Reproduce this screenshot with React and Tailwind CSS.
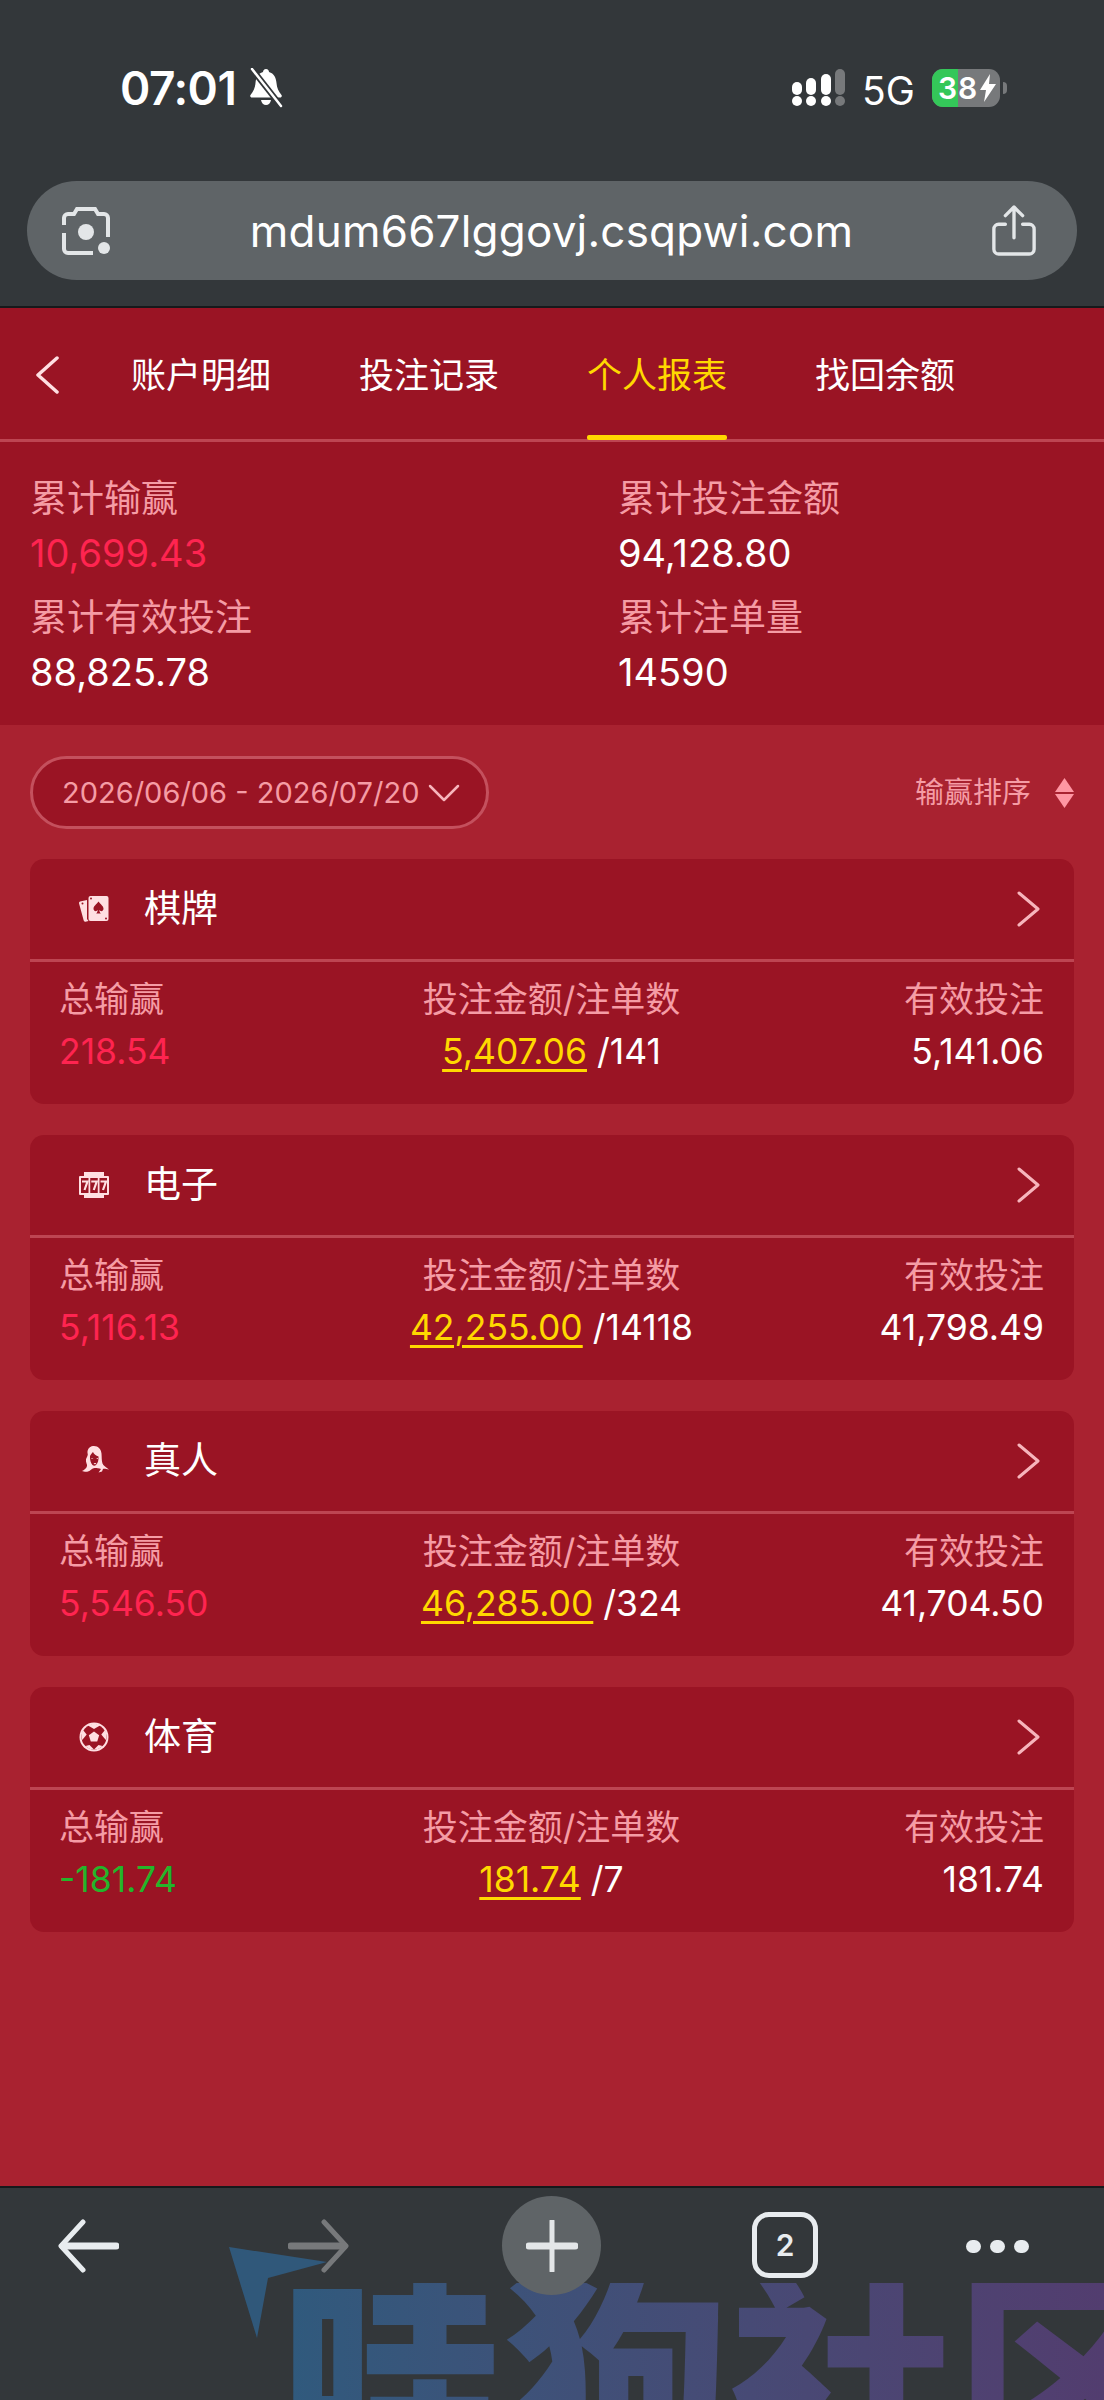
const SANS = 'font-["Inter","Noto_Sans_CJK_SC",sans-serif]'

const TABS = [
  { label: '账户明细' },
  { label: '投注记录' },
  { label: '个人报表', active: true },
  { label: '找回余额' },
]

const SUMMARY = [
  { label: '累计输赢', value: '10,699.43', color: 'text-[#ff2450]' },
  { label: '累计投注金额', value: '94,128.80', color: 'text-white' },
  { label: '累计有效投注', value: '88,825.78', color: 'text-white' },
  { label: '累计注单量', value: '14590', color: 'text-white' },
]

function CardsIcon() {
  return (
    <svg viewBox="0 0 32 32" className="w-8 h-8" fill="#ffdfe2">
      <path d="M2 8.500l7-1.500v19l1.500 2-3 .7a1.500 1.500 0 0 1-1.800-1.100L1 10.200A1.500 1.500 0 0 1 2 8.500z" />
      <rect x="10.500" y="3" width="20" height="25" rx="2" />
      <path fill="#9a1424" d="M20.500 8.500c2 3 5 4.300 5 7.200 0 2.600-3 3.200-4.200 1.400.1 1.500.6 2.600 1.500 3.400h-4.600c.9-.8 1.400-1.900 1.500-3.400-1.200 1.800-4.200 1.200-4.200-1.400 0-2.900 3-4.200 5-7.200z" />
      <circle cx="13" cy="5.500" r="1" fill="#9a1424" />
      <circle cx="28" cy="25.500" r="1" fill="#9a1424" />
      <circle cx="4.500" cy="10.500" r="1" fill="#9a1424" />
    </svg>
  )
}

function SlotIcon() {
  return (
    <svg viewBox="0 0 32 32" className="w-8 h-8">
      <path fill="#ffdfe2" d="M6 3h20v4h4a1 1 0 0 1 1 1v17a1 1 0 0 1-1 1h-4v3H6v-3H2a1 1 0 0 1-1-1V8a1 1 0 0 1 1-1h4z" />
      <g fill="#9a1424">
        <rect x="3" y="9" width="7.500" height="15" />
        <rect x="12.250" y="9" width="7.500" height="15" />
        <rect x="21.500" y="9" width="7.500" height="15" />
      </g>
      <g fill="none" stroke="#ffdfe2" strokeWidth="2.200">
        <path d="M4 12.500h5.500l-3 8.500" />
        <path d="M13.250 12.500h5.500l-3 8.500" />
        <path d="M22.500 12.500h5.500l-3 8.500" />
      </g>
    </svg>
  )
}

function LadyIcon() {
  return (
    <svg viewBox="0 0 32 32" className="w-8 h-8">
      <path fill="#ffdfe2" d="M15 1c5-.5 8 3 8.500 7.500.3 3.500 0 7 1 10 .8 2 3 3.500 6.500 6-2.500-.5-5-1-6-.5l-1 2.500-3.500 1 2.500-3.500c-2-1-4-1-6.500-1-2.500 0-4 3-6.500 3.500-2 .5-4.500 0-6-.5 2-1 4.500-2.500 5-5 .4-2-1.500-3.500-1-6.500.3-2 1.500-2.500 1.800-5C8.600 5 11 1.500 15 1z" />
      <path fill="#9a1424" d="M12 11c1-2 2-3 3-4 .8 2 3 3.500 5.500 4.500.3 3-.5 6.500-2.500 8.500-1 1-2.500 1-3.500 0-1.500-1.500-2.800-5-2.500-9z" />
      <path fill="#ffdfe2" d="M13.500 13l2 .6-2 .4zM20 13l-2 .6 2 .4zM15.500 18h3l-1.500 1.400z" />
    </svg>
  )
}

function BallIcon() {
  return (
    <svg viewBox="0 0 32 32" className="w-8 h-8">
      <circle cx="16" cy="16" r="14.500" fill="#ffdfe2" />
      <circle cx="16" cy="16" r="12.500" fill="#9a1424" />
      <g fill="#ffdfe2">
        <path d="M16 10.500l5.200 3.800-2 6.100h-6.400l-2-6.100z" />
        <path d="M10 4.500c3.600-2 8.400-2 12 0l-6 3.500z" />
        <path d="M27 9c1.700 3 2 7 .8 10l-4.500-5.500z" />
        <path d="M5 9c-1.700 3-2 7-.8 10l4.500-5.500z" />
        <path d="M7.500 25c2.500 2.500 5 3.500 8.500 3.500-1.500-1.500-3-3-4.500-4.500z" />
        <path d="M24.500 25c-2.500 2.500-5 3.500-8.500 3.500 1.500-1.500 3-3 4.500-4.500z" />
      </g>
    </svg>
  )
}

const GAMES = [
  { title: '棋牌', Icon: CardsIcon, win: '218.54', winColor: 'text-[#ff2450]', amount: '5,407.06', count: '/141', valid: '5,141.06' },
  { title: '电子', Icon: SlotIcon, win: '5,116.13', winColor: 'text-[#ff2450]', amount: '42,255.00', count: '/14118', valid: '41,798.49' },
  { title: '真人', Icon: LadyIcon, win: '5,546.50', winColor: 'text-[#ff2450]', amount: '46,285.00', count: '/324', valid: '41,704.50' },
  { title: '体育', Icon: BallIcon, win: '-181.74', winColor: 'text-[#24b52a]', amount: '181.74', count: '/7', valid: '181.74' },
]

function StatusBar() {
  return (
    <div className="flex items-center justify-between h-[176px] mb-[5px] pl-[120px] pr-[97px]">
      <div className="flex items-center">
        <span className="text-[46px] leading-none font-semibold text-white tracking-[-0.5px]">07:01</span>
        <svg viewBox="0 0 38 40" className="ml-[11px] w-[38px] h-[40px]" fill="white">
          <path d="M19 1c2 0 3 1.500 3 3 5 1.500 7 5.500 7.500 11 .4 5 2 8 5 12 .8 1.200 0 2.500-1.500 2.500H5c-1.500 0-2.300-1.300-1.500-2.500 3-4 4.500-7 5-12C9 9.500 11 5.500 16 4c0-1.500 1-3 3-3z" />
          <path d="M14 32h10c-.5 3-2.500 5-5 5s-4.500-2-5-5z" />
          <path d="M5 1l29 37" stroke="#33373a" strokeWidth="6" />
          <path d="M5 1l29 37" stroke="white" strokeWidth="2.500" strokeLinecap="round" />
        </svg>
      </div>
      <div className="flex items-center">
        <svg viewBox="0 0 54 38" className="w-[54px] h-[38px]">
          <g fill="white">
            <circle cx="5" cy="32" r="5" />
            <circle cx="19" cy="32" r="5" />
            <circle cx="34" cy="32" r="5" />
            <rect x="0" y="13" width="10" height="13" rx="5" />
            <rect x="14" y="9" width="10" height="17" rx="5" />
            <rect x="29" y="5" width="10" height="21" rx="5" />
          </g>
          <g fill="#77797b">
            <circle cx="48" cy="32" r="5" />
            <rect x="43" y="0" width="10" height="26" rx="5" />
          </g>
        </svg>
        <span className="ml-[16px] w-[54px] text-[39px] leading-none text-white translate-y-[2px]">5G</span>
        <div className="ml-[16px] flex items-center">
          <div className="relative flex items-center w-[68px] h-[38px] rounded-[11px] overflow-hidden bg-[#77797b]">
            <div className="w-[26px] h-full bg-[#34c759]" />
            <span className="absolute left-[6px] top-[4px] text-[30px] leading-[30px] font-semibold text-white tracking-[1px]">38</span>
            <svg viewBox="0 0 16 28" className="absolute right-[4px] top-[5px] w-[16px] h-[28px]" fill="white">
              <path d="M10 0L0 16h6l-2 12L16 10h-7z" />
            </svg>
          </div>
          <div className="ml-[3px] w-[4px] h-[12px] rounded-r-full bg-[#77797b]" />
        </div>
      </div>
    </div>
  )
}

function UrlBar() {
  return (
    <div className="mx-[27px] h-[99px] rounded-full bg-[#5f6467] flex items-center justify-between pl-[33px] pr-[40px]">
      <svg viewBox="0 0 52 52" className="w-[52px] h-[52px]" fill="none" stroke="#e3e6e8" strokeWidth="4">
        <path d="M4 20v-7a4 4 0 0 1 4-4h6l3-5h18l3 5h6a4 4 0 0 1 4 4v19" />
        <path d="M4 28v16a4 4 0 0 0 4 4h25" />
        <circle cx="26" cy="27" r="8" fill="#e3e6e8" stroke="none" />
        <circle cx="44" cy="43" r="6" fill="#e3e6e8" stroke="none" />
      </svg>
      <span className="text-[44px] leading-none text-white font-['Inter',sans-serif] tracking-[0.2px]">mdum667lggovj.csqpwi.com</span>
      <svg viewBox="0 0 48 54" className="w-[46px] h-[54px]" fill="none" stroke="#e3e6e8" strokeWidth="3.500" strokeLinecap="round" strokeLinejoin="round">
        <path d="M24 34V3M15 11l9-9 9 9" />
        <path d="M15 20H8a5 5 0 0 0-5 5v21a5 5 0 0 0 5 5h32a5 5 0 0 0 5-5V25a5 5 0 0 0-5-5h-7" />
      </svg>
    </div>
  )
}

// the site's watermark lies over the browser toolbar
function Watermark() {
  return (
    <div className="absolute left-0 top-[2186px] w-[1104px] h-[214px] overflow-hidden pointer-events-none">
      <svg viewBox="0 0 100 92" className="absolute left-[229px] top-[61px] w-[100px] h-[92px]">
        <path fill="#30587a" d="M0 0L98 15 39 31 28 91z" />
      </svg>
      <div className="absolute left-[280px] top-[97px] w-[824px] text-[225px] leading-[164px] font-black whitespace-nowrap bg-gradient-to-r from-[#2f5a7d] to-[#523d6f] bg-clip-text text-transparent font-['Noto_Sans_CJK_SC',sans-serif]">
        哇狗社区
      </div>
    </div>
  )
}

function BottomBar() {
  return (
    <div className="relative h-[214px] border-t-2 border-[#17191b] bg-[#33373a] flex items-start pl-[57px] pt-[8px]">
      <svg viewBox="0 0 62 54" className="w-[62px] h-[54px] mt-[23px]" fill="none" stroke="#e8ecef" strokeLinecap="round" strokeLinejoin="round">
        <path d="M26 3L4 27l22 24" strokeWidth="5" />
        <path d="M6 27h53" strokeWidth="7" />
      </svg>
      <svg viewBox="0 0 62 54" className="ml-[169px] w-[62px] h-[54px] mt-[23px]" fill="none" stroke="#77797b" strokeLinecap="round" strokeLinejoin="round">
        <path d="M36 3l22 24-22 24" strokeWidth="5" />
        <path d="M3 27h53" strokeWidth="7" />
      </svg>
      <div className="ml-[152px] relative z-10 w-[99px] h-[99px] rounded-full bg-[#5f6467] flex items-center justify-center">
        <svg viewBox="0 0 52 52" className="w-[52px] h-[52px]" stroke="#e3e6e8" strokeLinecap="round">
          <path d="M26 1v50" strokeWidth="5" />
          <path d="M3 26h46" strokeWidth="7" />
        </svg>
      </div>
      <div className="ml-[151px] mt-[16px] w-[66px] h-[66px] rounded-[17px] border-[5px] border-[#e8ecef] flex items-center justify-center">
        <span className="text-[30px] leading-none font-semibold text-[#e8ecef]">2</span>
      </div>
      <div className="ml-[148px] mt-[44px] flex gap-[9px]">
        <span className="w-[15px] h-[13px] rounded-full bg-[#e8ecef]" />
        <span className="w-[15px] h-[13px] rounded-full bg-[#e8ecef]" />
        <span className="w-[15px] h-[13px] rounded-full bg-[#e8ecef]" />
      </div>
    </div>
  )
}

function GameCard({ game }) {
  const { Icon } = game
  return (
    <div className="rounded-[14px] bg-[#9a1424] overflow-hidden">
      <div className="h-[103px] flex items-center border-b-[3px] border-[#bd4552] pl-[48px] pr-[34px]">
        <Icon />
        <span className="ml-[34px] text-[37px] text-white">{game.title}</span>
        <svg viewBox="0 0 23 36" className="ml-auto w-[23px] h-[36px]" fill="none" stroke="#f7b5bc" strokeWidth="3" strokeLinecap="round" strokeLinejoin="round">
          <path d="M2 2l19 16L2 34" />
        </svg>
      </div>
      <div className="h-[142px] pl-[29px] pr-[30px] pt-[11px] grid grid-cols-[1fr_auto_1fr]">
        <div>
          <div className="text-[35px] leading-[53px] text-[#f59ca5]">总输赢</div>
          <div className={`text-[35.5px] leading-[52px] ${game.winColor}`}>{game.win}</div>
        </div>
        <div className="text-center">
          <div className="text-[35px] leading-[53px] text-[#f59ca5]">投注金额/注单数</div>
          <div className="text-[35.5px] leading-[52px] text-white">
            <span className="text-[#ffd800] underline underline-offset-[5px] decoration-[3px]">{game.amount}</span>
            <span className="ml-[10px]">{game.count}</span>
          </div>
        </div>
        <div className="text-right">
          <div className="text-[35px] leading-[53px] text-[#f59ca5]">有效投注</div>
          <div className="text-[35.5px] leading-[52px] text-white">{game.valid}</div>
        </div>
      </div>
    </div>
  )
}

export default function App() {
  return (
    <div className={`relative w-[1104px] h-[2400px] flex flex-col overflow-hidden bg-[#a92230] ${SANS}`}>
      <div className="h-[308px] shrink-0 bg-[#33373a] border-b-2 border-[#17191b]">
        <StatusBar />
        <UrlBar />
      </div>

      <div className="h-[134px] shrink-0 pt-[3px] bg-[#9a1424] border-b-[3px] border-[#bd4552] flex items-stretch">
        <div className="w-[90px] flex items-center pl-[35px]">
          <svg viewBox="0 0 24 38" className="w-[24px] h-[38px]" fill="none" stroke="#ffdfe2" strokeWidth="3.500" strokeLinecap="round" strokeLinejoin="round">
            <path d="M22 2L3 19l19 17" />
          </svg>
        </div>
        <div className="flex gap-[88px] pl-[41px]">
          {TABS.map(tab => (
            <div key={tab.label} className={`relative w-[140px] flex items-center justify-center whitespace-nowrap text-[35px] ${tab.active ? 'text-[#ffd800]' : 'text-white'}`}>
              {tab.label}
              {tab.active && <div className="absolute left-0 right-0 -bottom-[1px] h-[5px] rounded-[2px] bg-[#ffd800]" />}
            </div>
          ))}
        </div>
      </div>

      <div className="h-[283px] shrink-0 bg-[#9a1424] pl-[30px] pt-[29px] grid grid-cols-[588px_1fr] content-start">
        {SUMMARY.map(item => (
          <div key={item.label} className="h-[119px]">
            <div className="text-[37px] leading-[56px] text-[#f59ca5]">{item.label}</div>
            <div className={`text-[38px] leading-[52px] ${item.color}`}>{item.value}</div>
          </div>
        ))}
      </div>

      <div className="flex-1 px-[30px] pt-[31px]">
        <div className="flex items-center justify-between h-[73px]">
          <div className="w-[459px] h-[73px] rounded-full border-[3px] border-[#c4505d] bg-[#9a1424] flex items-center pl-[29px] text-[29px] text-[#f59ca5] whitespace-nowrap">
            2026/06/06 - 2026/07/20
            <svg viewBox="0 0 32 18" className="ml-[9px] w-[32px] h-[18px]" fill="none" stroke="#f7b5bc" strokeWidth="2.500" strokeLinecap="round" strokeLinejoin="round">
              <path d="M2 2l14 14L30 2" />
            </svg>
          </div>
          <div className="flex items-center gap-[24px] text-[29px] text-[#f59ca5]">
            输赢排序
            <svg viewBox="0 0 19 30" className="w-[19px] h-[30px]" fill="#ff97a3">
              <path d="M9.500 0l9.500 14H0z" />
              <path d="M9.500 30L0 16h19z" />
            </svg>
          </div>
        </div>
        <div className="mt-[30px] flex flex-col gap-[31px]">
          {GAMES.map(game => <GameCard key={game.title} game={game} />)}
        </div>
      </div>

      <BottomBar />
      <Watermark />
    </div>
  )
}
